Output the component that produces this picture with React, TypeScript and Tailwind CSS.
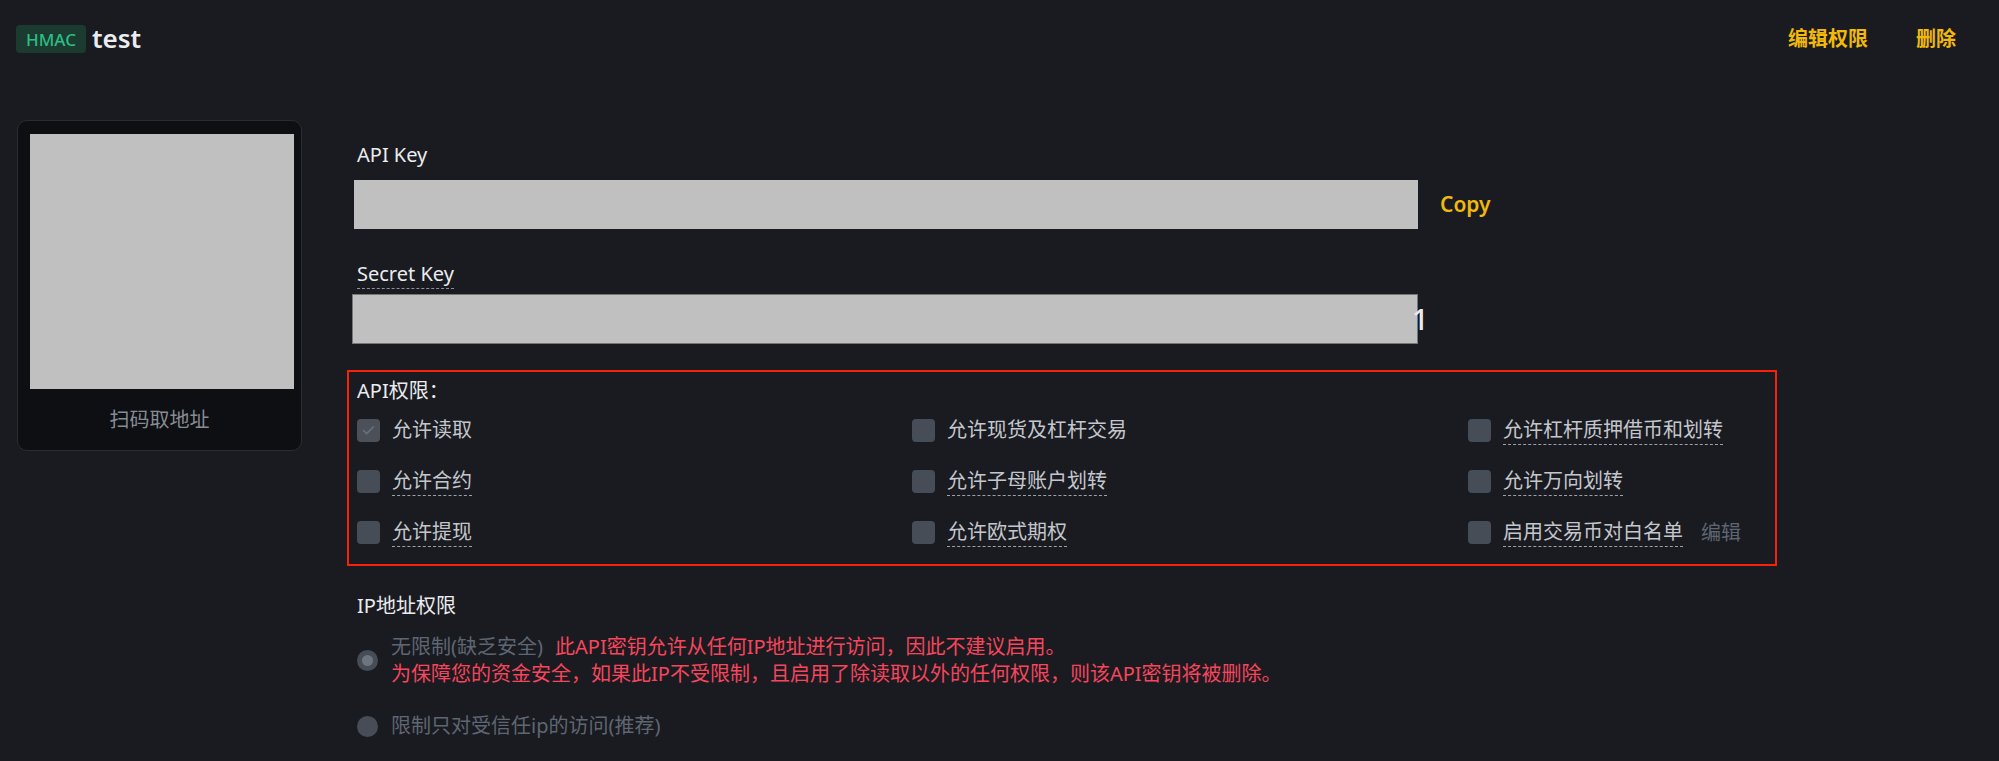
import React from "react";

const CheckMark = () => (
  <svg width="15" height="15" viewBox="0 0 24 24" fill="none" stroke="#6a7079" strokeWidth="2.6" strokeLinecap="round" strokeLinejoin="round">
    <path d="M20 6 9 17l-5-5" />
  </svg>
);

function Perm({ label, checked, dashed, extra }: { label: string; checked?: boolean; dashed?: boolean; extra?: string }) {
  return (
    <div className="flex items-center">
      <div
        className={
          checked
            ? "w-[23px] h-[23px] rounded-[4px] bg-[#4b5059] flex items-center justify-center shrink-0"
            : "w-[23px] h-[23px] rounded-[4px] bg-[#474d57] shrink-0"
        }
      >
        {checked && <CheckMark />}
      </div>
      <span
        className={
          dashed
            ? "ml-[12px] leading-[28px] border-b border-dashed border-[#9ba1a9] text-[#c3c7cd]"
            : "ml-[12px] leading-[28px] border-b border-transparent text-[#c3c7cd]"
        }
      >
        {label}
      </span>
      {extra && <span className="ml-[18px] leading-[28px] text-[#5e6673]">{extra}</span>}
    </div>
  );
}

export default function App() {
  return (
    <div className="w-[1999px] h-[761px] overflow-hidden bg-[#1a1b20] text-[#eaecef] text-[20px] font-['Noto_Sans','Noto_Sans_CJK_SC',sans-serif]">
      {/* header */}
      <div className="h-[78px] flex items-center justify-between pl-[16px] pr-[43px]">
        <div className="flex items-center gap-[6px]">
          <span className="h-[28px] w-[70px] rounded-[4px] bg-[#1b3a30] text-[#2ebd85] text-[17px] font-medium leading-none flex items-center justify-center">
            HMAC
          </span>
          <span className="text-[26px] font-semibold leading-none text-[#eaecef] -mt-[2px]">test</span>
        </div>
        <div className="flex items-center gap-[48px] text-[#f0b90b] text-[20px] font-semibold leading-none">
          <span>编辑权限</span>
          <span>删除</span>
        </div>
      </div>

      {/* body */}
      <div className="mt-[42px] pl-[17px] flex items-start">
        {/* QR card */}
        <div className="w-[285px] h-[331px] rounded-[10px] border border-[#2a2c32] bg-[#0e0f12] pt-[13px] pl-[12px] flex flex-col shrink-0">
          <div className="w-[264px] h-[255px] bg-[#c0c0c0]" />
          <div className="flex-1 -ml-[12px] flex items-center justify-center text-[20px] text-[#868c96]">扫码取地址</div>
        </div>

        {/* right column */}
        <div className="ml-[45px] flex flex-col">
          <div className="ml-[10px] mt-[21px] leading-[28px] text-[#eaecef]">API Key</div>
          <div className="ml-[7px] mt-[11px] flex items-center">
            <div className="w-[1064px] h-[49px] bg-[#c0c0c0]" />
            <span className="ml-[22px] text-[21px] font-semibold text-[#f0b90b] leading-none">Copy</span>
          </div>

          <div className="ml-[10px] mt-[31px] w-fit leading-[28px] border-b border-dashed border-[#8b9099] text-[#eaecef]">
            Secret Key
          </div>
          <div className="ml-[5px] mt-[5px] relative w-[1066px] h-[50px]">
            <div className="absolute inset-0 bg-[#c0c0c0] border border-[#767676]" />
            <span className="absolute left-[1060px] top-[7px] text-[29px] font-medium leading-[36px] text-[#eaecef]">1</span>
          </div>

          {/* permissions */}
          <div className="mt-[26px] w-[1430px] h-[196px] border-2 border-[#f5230d] pl-[8px] pt-[5px]">
            <div className="leading-[28px] text-[#eaecef]">API权限：</div>
            <div className="grid grid-cols-[555px_556px_1fr] auto-rows-[51px] items-center">
              <Perm label="允许读取" checked />
              <Perm label="允许现货及杠杆交易" />
              <Perm label="允许杠杆质押借币和划转" dashed />
              <Perm label="允许合约" dashed />
              <Perm label="允许子母账户划转" dashed />
              <Perm label="允许万向划转" dashed />
              <Perm label="允许提现" dashed />
              <Perm label="允许欧式期权" dashed />
              <Perm label="启用交易币对白名单" dashed extra="编辑" />
            </div>
          </div>

          {/* IP section */}
          <div className="ml-[10px] mt-[26px] leading-[28px] text-[#eaecef]">IP地址权限</div>
          <div className="ml-[10px] mt-[13px] flex items-center">
            <div className="w-[21px] h-[21px] rounded-full bg-[#474d57] flex items-center justify-center shrink-0">
              <div className="w-[11px] h-[11px] rounded-full bg-[#6f757e]" />
            </div>
            <div className="ml-[13px] leading-[27px]">
              <span className="text-[#5e6673]">无限制(缺乏安全)</span>
              <span className="ml-[12px] text-[#f6465d]">此API密钥允许从任何IP地址进行访问，因此不建议启用。</span>
              <br />
              <span className="text-[#f6465d]">为保障您的资金安全，如果此IP不受限制，且启用了除读取以外的任何权限，则该API密钥将被删除。</span>
            </div>
          </div>
          <div className="ml-[10px] mt-[25px] flex items-center">
            <div className="w-[21px] h-[21px] rounded-full bg-[#474d57] shrink-0" />
            <span className="ml-[13px] leading-[28px] text-[#5e6673]">限制只对受信任ip的访问(推荐)</span>
          </div>
        </div>
      </div>
    </div>
  );
}
